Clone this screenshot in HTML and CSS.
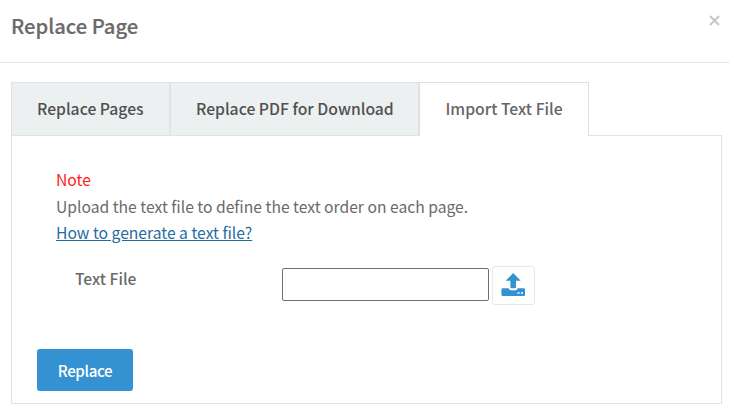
FILE: index.html
```html
<!DOCTYPE html>
<html lang="en">
<head>
  <meta charset="UTF-8">
  <meta name="viewport" content="width=device-width, initial-scale=1.0">
  <title>Replace Page</title>
  <link rel="stylesheet" href="styles.css">
</head>
<body>
  <div class="modal">
    <div class="modal-header">
      <h4 class="modal-title">Replace Page</h4>
      <button type="button" class="close" aria-label="Close">
        <svg width="11" height="11" viewBox="0 0 11 11"><path d="M1 1l9 9M10 1l-9 9" fill="none" stroke="#c6c6c6" stroke-width="2"/></svg>
      </button>
    </div>

    <div class="modal-body">
      <ul class="tabs">
        <li class="tab tab-pages"><a href="#">Replace Pages</a></li>
        <li class="tab tab-pdf"><a href="#">Replace PDF for Download</a></li>
        <li class="tab tab-import active"><a href="#">Import Text File</a></li>
      </ul>

      <form class="tab-content">
        <div class="note">
          <p class="note-title">Note</p>
          <p class="note-text">Upload the text file to define the text order on each page.</p>
          <p><a class="help-link" href="#">How to generate a text file?</a></p>
        </div>

        <div class="form-row">
          <label for="text-file">Text File</label>
          <input type="text" id="text-file">
          <button type="button" class="upload-btn" aria-label="Upload">
            <svg width="24" height="24" viewBox="0 0 24 24" fill="#3592d2">
              <path d="M12.200 0L19.700 7.800H15V14Q15 15.300 14 15.300H10.400Q9.400 15.300 9.400 14V7.800H4.700Z"/>
              <path d="M1.700 15.200H7.700Q8.200 17.200 10 17.200H14.400Q16.200 17.200 16.700 15.200H22.700Q24 15.200 24 16.500V21.700Q24 23 22.700 23H1.700Q0.400 23 0.400 21.700V16.500Q0.400 15.200 1.700 15.200Z"/>
              <path d="M16.500 19h2v2h-2zM20 19h2v2h-2z" fill="#cfe5f5"/>
            </svg>
          </button>
        </div>

        <button type="submit" class="replace-btn">Replace</button>
      </form>
    </div>
  </div>
</body>
</html>
```
FILE: styles.css
```css
* {
  margin: 0;
  padding: 0;
  box-sizing: border-box;
}

body {
  font-family: 'Noto Sans CJK JP', 'Noto Sans', sans-serif;
  font-size: 15.67px;
  line-height: 26px;
  color: #6a6a6a;
  background: #fff;
}

/* Header */
.modal-header {
  display: flex;
  justify-content: space-between;
  height: 63px;
  padding: 13px 9px 0 11px;
  border-bottom: 1px solid #e0e3e4;
}

.modal-title {
  font-size: 20.2px;
  font-weight: 500;
  line-height: 26px;
  -webkit-text-stroke: 0.2px #6a6a6a;
}

.close {
  display: flex;
  width: 11px;
  height: 11px;
  margin-top: 2px;
  border: none;
  background: none;
  cursor: pointer;
}

.modal-body {
  padding: 19px 7px 0 11px;
}

/* Tabs */
.tabs {
  display: flex;
  list-style: none;
}

.tab {
  height: 53px;
  background: #ecf0f1;
  border: 1px solid #dce4e6;
  border-bottom: none;
}

.tab a {
  display: block;
  padding: 13px 0 0 25px;
  font-size: 15.73px;
  font-weight: 500;
  color: #505050;
  text-decoration: none;
  white-space: nowrap;
}

.tab-pages {
  width: 159px;
}

.tab-pdf {
  width: 249px;
}

.tab-import {
  width: 170px;
}

/* Covers the panel's top border */
.tab.active {
  height: 54px;
  margin-bottom: -1px;
  background: #fff;
  border-color: #dcdfe0;
  position: relative;
}

.tab.active a {
  padding-left: 25.5px;
  color: #666;
}

/* Panel */
.tab-content {
  height: 269px;
  padding: 31px 25px 0;
  border: 1px solid #dce4e6;
}

.note {
  padding-left: 19px;
}

.note-title {
  color: #ff1a1a;
}

.note-text {
  padding-top: 1px;
}

.help-link {
  color: #1f6c9f;
  text-decoration: underline;
}

.form-row {
  display: flex;
  align-items: flex-start;
  margin-top: 20px;
  padding-left: 38px;
}

.form-row label {
  width: 207px;
  font-weight: 500;
}

.form-row input {
  width: 207px;
  height: 33px;
  margin: 2px 3px 0 0;
  padding: 0 6px;
  border: 1px solid #6f6f6f;
  border-radius: 2px;
  font: inherit;
}

.upload-btn {
  display: flex;
  justify-content: center;
  align-items: center;
  width: 43px;
  height: 39px;
  padding: 0 1px 1px 0;
  background: #fff;
  border: 1px solid #e7e7e7;
  border-radius: 3px;
  cursor: pointer;
}

.replace-btn {
  display: block;
  width: 96px;
  height: 42px;
  margin-top: 44px;
  border: none;
  border-radius: 3px;
  background: #3592d2;
  color: #fff;
  font: inherit;
  font-size: 15.2px;
  font-weight: 500;
  letter-spacing: -0.4px;
  cursor: pointer;
}
```
